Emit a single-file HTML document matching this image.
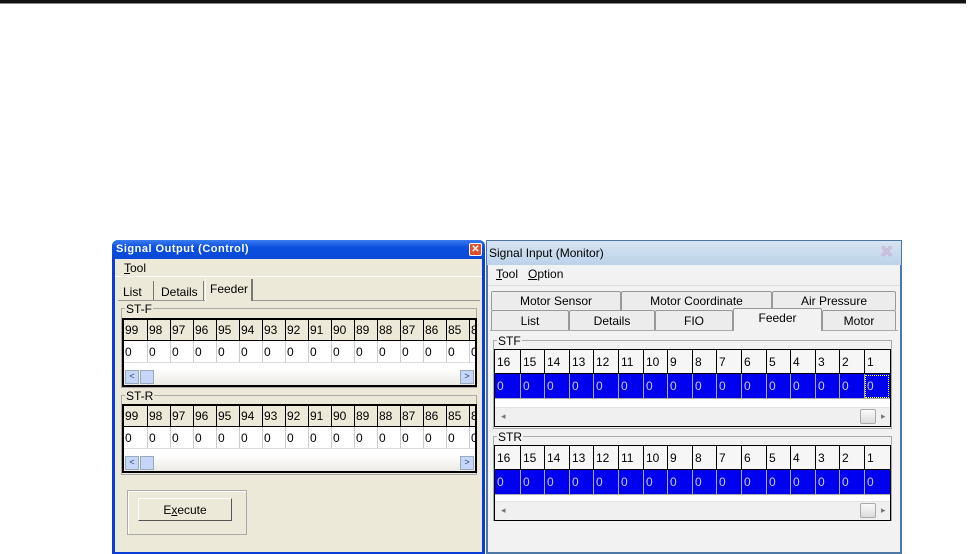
<!DOCTYPE html>
<html><head><meta charset="utf-8"><style>
*{margin:0;padding:0;box-sizing:border-box}
body{width:973px;height:554px;background:#fff;position:relative;overflow:hidden;font-family:"Liberation Sans",sans-serif;font-size:11px;color:#000}
.a{position:absolute}
.tab{position:absolute;text-align:center;border:1px solid #999;border-bottom:none;background:#ececec;border-radius:2px 2px 0 0;font-size:12px}
.lt{font-size:12px}
</style></head><body>
<div class="a" style="left:0;top:0;width:966px;height:4px;background:#111;border-bottom:1px solid #888"></div>

<!-- LEFT WINDOW -->
<div class="a" style="left:112px;top:240px;width:373px;height:314px;background:#0a3cd8;border-radius:6px 6px 0 0"></div>
<div class="a" style="left:112px;top:240px;width:373px;height:19px;background:linear-gradient(#3a7cf0,#0a4fe0 40%,#0a48d8);border-radius:6px 6px 0 0"></div>
<div class="a" style="left:116px;top:243px;color:#fff;font-weight:bold;font-size:11px;letter-spacing:0.5px">Signal Output (Control)</div>
<div class="a" style="left:469px;top:243px;width:13px;height:13px;background:#e0502c;border:1px solid #fff;border-radius:2px;color:#fff;font-size:10px;font-weight:bold;text-align:center;line-height:11px">✕</div>
<div class="a" style="left:115px;top:259px;width:367px;height:293px;background:#ece9d8"></div>
<div class="a lt" style="left:124px;top:261px"><u>T</u>ool</div>
<div class="a" style="left:115px;top:276px;width:367px;height:1px;background:#fff"></div>
<div class="a" style="left:118px;top:300px;width:362px;height:1px;background:#999"></div>
<div class="a lt" style="left:118px;top:281px;width:36px;height:19px;border-right:1px solid #777;padding:4px 0 0 5px">List</div>
<div class="a lt" style="left:157px;top:281px;width:47px;height:19px;border-right:1px solid #777;padding:4px 0 0 4px">Details</div>
<div class="a lt" style="left:205px;top:279px;width:48px;height:22px;background:#ece9d8;border-right:2px solid #777;border-left:1px solid #fff;padding:3px 0 0 4px">Feeder</div>
<div class="a" style="left:121px;top:308px;width:356px;height:80px;border:1px solid #aaa"></div>
<div class="a lt" style="left:125px;top:302px;background:#ece9d8;padding:0 1px">ST-F</div>
<div class="a" style="left:122px;top:318px;width:355px;height:69px;border:2px solid #000;background:#fff;overflow:hidden"></div>
<div class="a" style="left:121px;top:395px;width:356px;height:80px;border:1px solid #aaa"></div>
<div class="a lt" style="left:125px;top:389px;background:#ece9d8;padding:0 1px">ST-R</div>
<div class="a" style="left:122px;top:404px;width:355px;height:69px;border:2px solid #000;background:#fff;overflow:hidden"></div>
<div class="a" style="left:127px;top:490px;width:120px;height:45px;border:1px solid #aaa;box-shadow:1px 1px 0 #fff inset"></div>
<div class="a lt" style="left:138px;top:498px;width:94px;height:23px;background:#ece9d8;border:1px solid #fff;border-right-color:#555;border-bottom-color:#555;text-align:center;padding-top:4px">E<u>x</u>ecute</div>

<!-- RIGHT WINDOW -->
<div class="a" style="left:486px;top:240px;width:416px;height:314px;background:#4d78a6"></div>
<div class="a" style="left:487px;top:241px;width:414px;height:24px;background:linear-gradient(#d7e4f2,#bcd2ea)"></div>
<div class="a" style="left:489px;top:246px;font-size:12px">Signal Input (Monitor)</div>
<div class="a" style="left:880px;top:245px;color:#c8c8d8;font-size:16px;font-weight:bold;line-height:16px;text-shadow:0 0 1px #b040c0">✕</div>
<div class="a" style="left:488px;top:265px;width:412px;height:287px;background:#f2f2f2"></div>
<div class="a" style="left:496px;top:267px;font-size:12px"><u>T</u>ool&nbsp;&nbsp;&nbsp;<u>O</u>ption</div>
<div class="a" style="left:488px;top:285px;width:412px;height:1px;background:#ddd"></div>
<div class="tab" style="left:491px;top:291px;width:130px;height:19px;padding-top:2px">Motor Sensor</div>
<div class="tab" style="left:621px;top:291px;width:151px;height:19px;padding-top:2px">Motor Coordinate</div>
<div class="tab" style="left:772px;top:291px;width:124px;height:19px;padding-top:2px">Air Pressure</div>
<div class="tab" style="left:491px;top:310px;width:78px;height:20px;padding-top:3px">List</div>
<div class="tab" style="left:569px;top:310px;width:86px;height:20px;padding-top:3px">Details</div>
<div class="tab" style="left:655px;top:310px;width:78px;height:20px;padding-top:3px">FIO</div>
<div class="tab" style="left:822px;top:310px;width:74px;height:20px;padding-top:3px">Motor</div>
<div class="a" style="left:490px;top:330px;width:408px;height:1px;background:#aaa"></div>
<div class="tab" style="left:733px;top:308px;width:89px;height:23px;background:#f2f2f2;padding-top:2px">Feeder</div>
<div class="a" style="left:493px;top:340px;width:399px;height:89px;border:1px solid #aaa"></div>
<div class="a" style="left:497px;top:334px;background:#f2f2f2;padding:0 1px;font-size:12px">STF</div>
<div class="a" style="left:494px;top:349px;width:397px;height:78px;border:1px solid #000;background:#fff;overflow:hidden" id="g1"></div>
<div class="a" style="left:493px;top:436px;width:399px;height:85px;border:1px solid #aaa"></div>
<div class="a" style="left:497px;top:430px;background:#f2f2f2;padding:0 1px;font-size:12px">STR</div>
<div class="a" style="left:494px;top:445px;width:397px;height:76px;border:1px solid #000;background:#fff;overflow:hidden" id="g2"></div>

<script>
function L(el){
 var h='<div class="a" style="left:0;top:0;width:400px;height:21px;background:#ece9d8;border-bottom:1px solid #000"></div>';
 for(var i=0;i<16;i++){var n=99-i,x=i*23;
  h+='<div class="a" style="left:'+x+'px;top:0;width:23px;height:21px;border-left:'+(i?'1px solid #000':'none')+';padding:3px 0 0 1px;font-size:12px">'+(i==15?'8':n)+'</div>';
  h+='<div class="a" style="left:'+x+'px;top:21px;width:23px;height:22px;border-left:'+(i?'1px solid #ccc':'none')+';border-bottom:1px solid #ddd;padding:4px 0 0 1px;font-size:12px">0</div>';}
 h+='<div class="a" style="left:0;top:49px;width:355px;height:16px;background:linear-gradient(#fff,#eceae4)"></div>';
 h+='<div class="a" style="left:1px;top:50px;width:14px;height:14px;background:#c6d6f8;border:1px solid #9ab;font-size:9px;text-align:center;color:#246">&lt;</div>';
 h+='<div class="a" style="left:16px;top:50px;width:14px;height:14px;background:#c6d6f8;border:1px solid #9ab"></div>';
 h+='<div class="a" style="left:336px;top:50px;width:14px;height:14px;background:#c6d6f8;border:1px solid #9ab;font-size:9px;text-align:center;color:#246">&gt;</div>';
 el.innerHTML=h;}
var boxes=document.querySelectorAll('div[style*="border:2px solid #000"]');L(boxes[0]);L(boxes[1]);
function R(el,focus){var h='';
 var w=24.6;
 h+='<div class="a" style="left:0;top:0;width:400px;height:24px;background:#f6f6f6;border-bottom:1px solid #000"></div>';
 h+='<div class="a" style="left:0;top:24px;width:395px;height:25px;background:#0000f0;border-bottom:1px solid #aaa"></div>';
 for(var i=0;i<16;i++){var x=Math.round(i*w);
  h+='<div class="a" style="left:'+x+'px;top:0;width:25px;height:24px;border-left:'+(i?'1px solid #000':'none')+';padding:5px 0 0 2px;font-size:12px">'+(16-i)+'</div>';
  h+='<div class="a" style="left:'+x+'px;top:24px;width:25px;height:25px;border-left:'+(i?'1px solid #aab':'none')+';padding:5px 0 0 2px;font-size:12px;color:#ccf">0</div>';}
 h+='<div class="a" style="left:395px;top:0;width:1px;height:49px;background:#000"></div>';
 if(focus)h+='<div class="a" style="left:370px;top:25px;width:24px;height:23px;border:1px dotted #ff0"></div>';
 h+='<div class="a" style="left:0;bottom:0;width:397px;height:19px;background:#f0f0f0;border-top:1px solid #e4e4e4"></div>';
 h+='<div class="a" style="left:6px;bottom:4px;font-size:9px;color:#777">◂</div>';
 h+='<div class="a" style="left:386px;bottom:4px;font-size:9px;color:#777">▸</div>';
 h+='<div class="a" style="left:365px;bottom:2px;width:16px;height:15px;background:linear-gradient(#fafafa,#dcdcdc);border:1px solid #aaa;border-radius:2px"></div>';
 el.innerHTML=h;}
R(document.getElementById('g1'),1);R(document.getElementById('g2'),0);
</script>
</body></html>
